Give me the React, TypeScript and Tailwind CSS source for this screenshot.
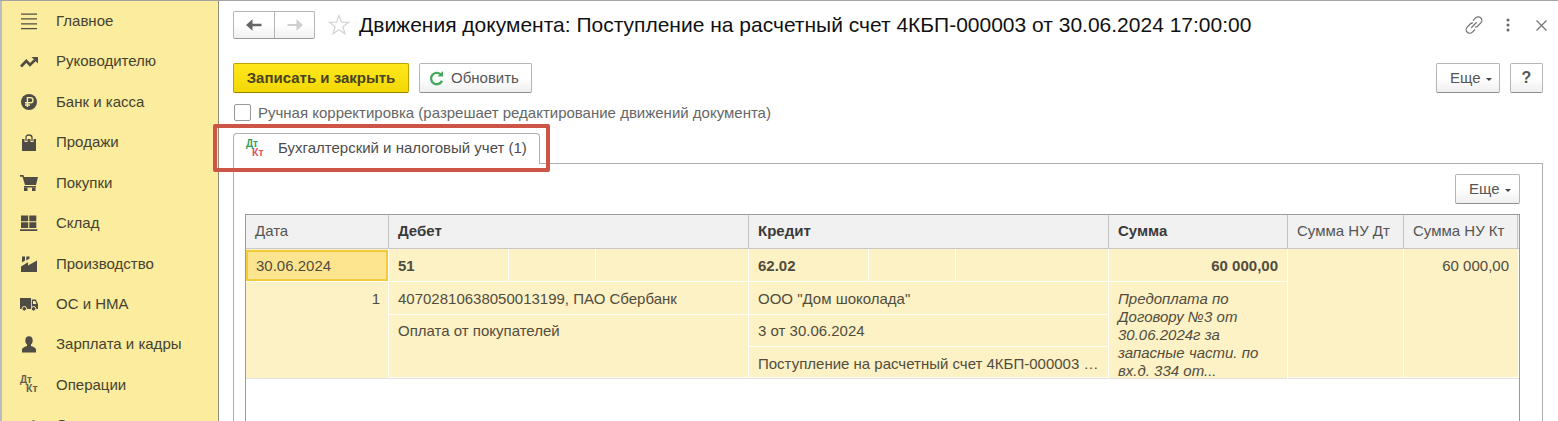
import React from 'react'
import clsx from 'clsx'

const MENU = [
  { icon: 'main', label: 'Главное' },
  { icon: 'trend', label: 'Руководителю' },
  { icon: 'ruble', label: 'Банк и касса' },
  { icon: 'bag', label: 'Продажи' },
  { icon: 'cart', label: 'Покупки' },
  { icon: 'stock', label: 'Склад' },
  { icon: 'factory', label: 'Производство' },
  { icon: 'truck', label: 'ОС и НМА' },
  { icon: 'person', label: 'Зарплата и кадры' },
  { icon: 'dtkt', label: 'Операции' },
  { icon: 'chart', label: 'Отчеты' },
]

function DtKt({ dt, kt }: { dt: string; kt: string }) {
  return (
    <svg width="18" height="18" viewBox="0 0 18 18" className="overflow-visible font-bold">
      <text x="0" y="7" fontSize="10" fill={dt}>Дт</text>
      <text x="6" y="16" fontSize="10.500" fill={kt}>Кт</text>
    </svg>
  )
}

function MenuIcon({ name }: { name: string }) {
  if (name === 'dtkt') return <DtKt dt="#625f50" kt="#625f50" />

  return (
    <svg width="18" height="18" viewBox="0 0 18 18" fill="#4f4c45">
      {name === 'main' && (
        <path d="M1 1.500h16v1.300H1zM1 6.300h16v1.300H1zM1 11.200h16v1.300H1zM1 16h16v1.300H1z" />
      )}
      {name === 'trend' && (
        <>
          <path d="M1 13.500L6.300 8l3.700 4 5-5" fill="none" stroke="#4f4c45" strokeWidth="2.600" />
          <path d="M11.500 4H18v6.500z" />
        </>
      )}
      {name === 'ruble' && (
        <>
          <circle cx="9" cy="9" r="8" />
          <path
            d="M7.400 14V4.600h3a2.600 2.600 0 0 1 0 5.200H5M5 12h5"
            fill="none"
            stroke="#fbec9e"
            strokeWidth="1.400"
          />
        </>
      )}
      {name === 'bag' && (
        <>
          <path d="M2 5h14v12H2z" />
          <path d="M6 8V3.400Q6 1 9 1t3 2.400V8" fill="none" stroke="#fbec9e" strokeWidth="3" />
          <path d="M6 7V3.400Q6 1 9 1t3 2.400V7" fill="none" stroke="#4f4c45" strokeWidth="1.300" />
        </>
      )}
      {name === 'cart' && (
        <>
          <path d="M0 1h3.400l.7 2H18l-2 8H5L2.500 2.700H0z" />
          <path d="M4 12h12v1.500H4z" />
          <path d="M4 13.500h3.500V17H4zM12 13.500h3.500V17H12z" />
        </>
      )}
      {name === 'stock' && (
        <path d="M1 1.500h7.200v5.700H1zM9.300 1.500h7v5.700h-7zM1 8.300h7.200V14H1zM9.300 8.300h7V14h-7zM0 15.200h17.300V17H0z" />
      )}
      {name === 'factory' && (
        <path d="M1 17V11.500l7-4.300v3.300l9-5V17zM2 1.500h3v4L2 7.500zM6.300 1.500h3.200v2L6.300 5.500z" />
      )}
      {name === 'truck' && (
        <>
          <path d="M0 3h11v11H0z" />
          <path d="M11.800 4.500h4L18 9v5h-6.200z" />
          <path d="M13 6h2.200l1.300 3H13z" fill="#fbec9e" />
          <circle cx="4.300" cy="13.800" r="2.300" stroke="#fbec9e" />
          <circle cx="13.600" cy="13.800" r="2.300" stroke="#fbec9e" />
        </>
      )}
      {name === 'person' && (
        <>
          <ellipse cx="9" cy="4.500" rx="3.700" ry="4.300" />
          <path d="M2 16.500v-3q0-2 5-3.500V8h4v2q5 1.500 5 3.500v3z" />
        </>
      )}
      {name === 'chart' && <path d="M12 3.500h3V17h-3zM7 8h3v9H7z" />}
    </svg>
  )
}

function Sidebar() {
  return (
    <aside className="h-full w-[219px] shrink-0 overflow-hidden border-r border-l-2 border-r-[#8f8d78] border-l-[#b9bcc0] bg-[#fbec9e]">
      {MENU.map((item) => (
        <div key={item.label} className="flex h-[40.450px] items-center pl-[18px]">
          <MenuIcon name={item.icon} />
          <span className="ml-[18px] text-[15px] text-[#454230]">{item.label}</span>
        </div>
      ))}
    </aside>
  )
}

function Button({ className, children }: { className?: string; children: React.ReactNode }) {
  return (
    <button
      className={clsx(
        'flex items-center rounded-[2px] border border-[#b5b5b5] border-b-[#8f8f8f]',
        'bg-linear-to-b from-white from-50% to-[#efefef] text-[15px] text-[#555]',
        className
      )}
    >
      {children}
    </button>
  )
}

function MoreButton({ className }: { className: string }) {
  return (
    <Button className={clsx('h-[30px] pl-[13px]', className)}>
      Еще
      <svg width="6" height="3" viewBox="0 0 6 3" className="mt-[3px] ml-[5px]" fill="#444">
        <path d="M0 0h6L3 3z" />
      </svg>
    </Button>
  )
}

function TitleBar() {
  return (
    <div className="flex h-[28px] items-center">
      <div className="flex h-[28px] w-[82px] rounded-[2px] border border-[#b5b5b5] border-b-[#999] bg-linear-to-b from-white from-50% to-[#f0f0f0]">
        <div className="flex w-[41px] items-center justify-center border-r border-[#b5b5b5]">
          <svg width="16" height="12" viewBox="0 0 16 12" fill="#666">
            <path d="M0 6L6.500.3v4.400H15.500v2.600H6.500v4.400z" />
          </svg>
        </div>
        <div className="flex flex-1 items-center justify-center">
          <svg width="16" height="12" viewBox="0 0 16 12" fill="#cfcfcf">
            <path d="M16 6L9.500.3v4.600H.5v2.200h9v4.600z" />
          </svg>
        </div>
      </div>
      <svg
        width="22"
        height="22"
        viewBox="0 0 22 22"
        className="ml-[13px] shrink-0"
        fill="none"
        stroke="#d3d5d8"
        strokeWidth="1.300"
      >
        <path d="M11 1.500l2.500 6.700 7 .2-5.600 4.400 2 7L11 15.800l-5.900 4 2-7L1.500 8.400l7-.2z" />
      </svg>
      <h1 className="ml-[9px] text-[21px] leading-[28px] whitespace-nowrap text-[#111]">
        Движения документа: Поступление на расчетный счет 4КБП-000003 от 30.06.2024 17:00:00
      </h1>
      <div className="ml-auto flex items-center text-[#777]">
        <svg width="18" height="18" viewBox="0 0 18 18" fill="none" stroke="currentColor" strokeWidth="1.300">
          <path d="M8 4.500l2.600-2.600a3.500 3.500 0 0 1 5.200 5L12.500 10.200a3.300 3.300 0 0 1-2.300.8" />
          <path d="M10 13.500l-2.600 2.600a3.500 3.500 0 0 1-5.200-5L5.500 7.800a3.300 3.300 0 0 1 2.300-.8M6.300 11.700l5.400-5.400" />
        </svg>
        <svg width="4" height="14" viewBox="0 0 4 14" className="ml-[23px]" fill="#666">
          <circle cx="2" cy="2" r="1.500" />
          <circle cx="2" cy="7" r="1.500" />
          <circle cx="2" cy="12" r="1.500" />
        </svg>
        <svg width="11" height="11" viewBox="0 0 11 11" className="mr-[11px] ml-[26px]" stroke="currentColor" strokeWidth="1.300">
          <path d="M.5.5l10 10M10.500.5l-10 10" />
        </svg>
      </div>
    </div>
  )
}

function CommandBar() {
  return (
    <div className="mt-[24px] flex h-[30px] items-center pr-[15px]">
      <button className="h-[30px] w-[176px] rounded-[2px] border border-[#bfa200] border-b-[#988100] bg-linear-to-b from-[#ffe71c] to-[#f3d800] text-[15px] font-bold whitespace-nowrap text-[#4a4320]">
        Записать и закрыть
      </button>
      <Button className="ml-[10px] h-[30px] w-[113px] pl-[9px]">
        <svg width="15" height="15" viewBox="0 0 15 15" fill="none" stroke="#45a85a" strokeWidth="2.300">
          <path d="M11.500 3.200A5.700 5.700 0 1 0 13 9.800" />
          <path d="M8.500 5.500H14V0z" fill="#45a85a" stroke="none" />
        </svg>
        <span className="ml-[7px]">Обновить</span>
      </Button>
      <div className="ml-auto flex gap-[10px]">
        <MoreButton className="w-[64px]" />
        <Button className="h-[30px] w-[33px] justify-center text-[16px] font-bold text-[#444]">?</Button>
      </div>
    </div>
  )
}

const cell = 'border-r border-b border-[#fffdf5] px-[9px] text-[#514d3c]'

function EntrySide({ account, lines }: { account: string; lines: string[] }) {
  return (
    <div className="flex min-w-0 flex-col">
      <div className="grid h-[33px] shrink-0 grid-cols-[120px_87px_1fr] grid-rows-[33px] leading-[33px]">
        <div className={clsx(cell, 'font-bold text-[#3a3a3a]')}>{account}</div>
        <div className={cell} />
        <div className={cell} />
      </div>
      {lines.map((line, i) => (
        <div
          key={line}
          className={clsx(
            cell,
            'truncate',
            i === 0 && 'h-[33px] leading-[33px]',
            i === 1 && 'leading-[31px]',
            i === 2 && 'leading-[33px]',
            i === lines.length - 1 ? 'flex-1' : i > 0 && 'h-[32px]'
          )}
        >
          {line}
        </div>
      ))}
    </div>
  )
}

const columns = 'grid grid-cols-[143px_360px_360px_179px_116px_1fr]'

function EntriesTable() {
  const head = 'border-r border-[#c4c4c4] pl-[9px] whitespace-nowrap'

  return (
    <div className="mt-[10px] mr-[22px] ml-[11px] flex-1 border border-b-0 border-[#9a9a9a] text-[15px]">
      <div className={clsx(columns, 'h-[34px] border-b border-[#c8c8c8] bg-[#f1f1f1] leading-[32px] text-[#555]')}>
        <div className={head}>Дата</div>
        <div className={clsx(head, 'font-bold text-[#3a3a3a]')}>Дебет</div>
        <div className={clsx(head, 'font-bold text-[#3a3a3a]')}>Кредит</div>
        <div className={clsx(head, 'font-bold text-[#3a3a3a]')}>Сумма</div>
        <div className={head}>Сумма НУ Дт</div>
        <div className={clsx(head, 'mr-px')}>Сумма НУ Кт</div>
      </div>
      <div className={clsx(columns, 'h-[130px] grid-rows-[129px] border-b border-[#e2e2e2] bg-[#fdf1c6]')}>
        <div className="border-r border-[#fffdf5] text-[#514d3c]">
          <div className="mt-px h-[31px] border-2 border-[#f3cb3a] bg-[#fde48e] pl-2 leading-[27px]">
            30.06.2024
          </div>
          <div className="border-t border-[#fffdf5] pr-[8px] text-right leading-[33px]">1</div>
        </div>
        <EntrySide account="51" lines={['40702810638050013199, ПАО Сбербанк', 'Оплата от покупателей']} />
        <EntrySide
          account="62.02"
          lines={[
            'ООО "Дом шоколада"',
            '3 от 30.06.2024',
            'Поступление на расчетный счет 4КБП-000003 …',
          ]}
        />
        <div className="flex flex-col">
          <div className={clsx(cell, 'h-[33px] text-right leading-[33px] font-bold text-[#3a3a3a]')}>
            60 000,00
          </div>
          <div className={clsx(cell, 'flex-1 pt-[8px] leading-[18px] whitespace-nowrap italic')}>
            Предоплата по
            <br />
            Договору №3 от
            <br />
            30.06.2024г за
            <br />
            запасные части. по
            <br />
            вх.д. 334 от...
          </div>
        </div>
        <div className={cell} />
        <div className={clsx(cell, 'text-right leading-[33px]')}>60 000,00</div>
      </div>
    </div>
  )
}

export default function App() {
  return (
    <div className="relative flex h-[421px] w-[1558px] overflow-hidden border-t border-[#a3a3a3] bg-white font-['Liberation_Sans',Arial,sans-serif]">
      <Sidebar />
      <main className="flex min-w-0 flex-1 flex-col pt-[10px] pl-[14px]">
        <TitleBar />
        <CommandBar />
        <label className="mt-[11px] flex h-[17px] items-center text-[15px] whitespace-nowrap text-[#666]">
          <span className="ml-[1px] h-[17px] w-[17px] rounded-[2px] border border-[#999]" />
          <span className="mt-px ml-[7px]">
            Ручная корректировка (разрешает редактирование движений документа)
          </span>
        </label>
        <div className="mt-[12px] flex h-[31px]">
          <div className="flex w-[307px] items-center rounded-t-[4px] border border-b-0 border-[#b0b0b0] pl-[12px] text-[15px] whitespace-nowrap text-[#4d4d4d]">
            <DtKt dt="#2f9e5b" kt="#e0525c" />
            <span className="-mt-px ml-[14px]">Бухгалтерский и налоговый учет (1)</span>
          </div>
          <div className="mr-[15px] flex-1 border-b border-[#b0b0b0]" />
        </div>
        <div className="mr-[15px] flex flex-1 flex-col border-x border-[#b0b0b0]">
          <div className="mt-[10px] mr-[22px] flex justify-end">
            <MoreButton className="w-[65px]" />
          </div>
          <EntriesTable />
        </div>
      </main>
      {/* highlight around the active tab */}
      <div className="absolute top-[123px] left-[213px] h-[48px] w-[337px] rounded-[2px] border-4 border-[#cd5446]" />
    </div>
  )
}
